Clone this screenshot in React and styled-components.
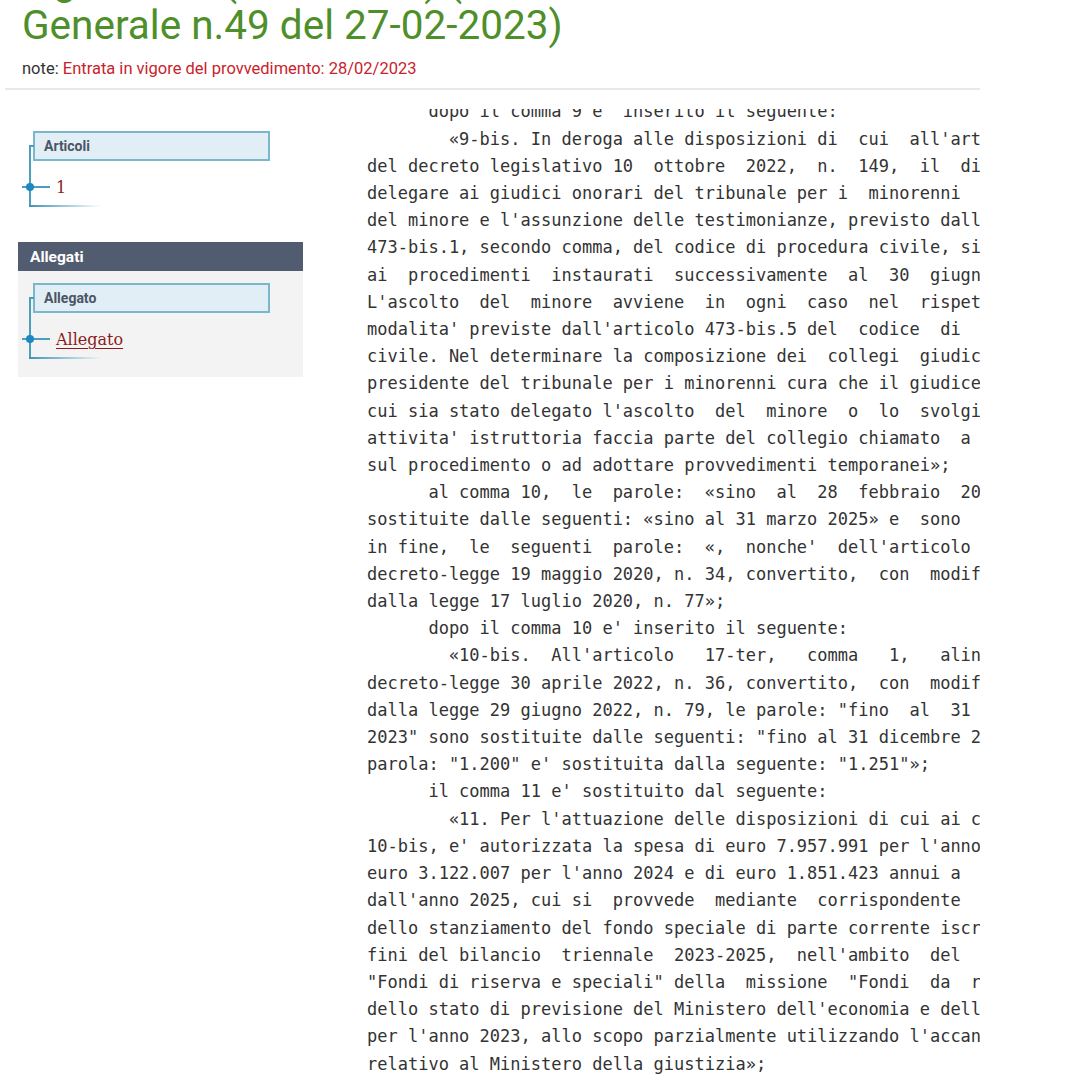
import styled, { createGlobalStyle } from "styled-components";

const GlobalStyle = createGlobalStyle`
  html, body {
    margin: 0;
    padding: 0;
    background: #fff;
    overflow: hidden;
  }
`;

const Page = styled.div`
  width: 975px;
  margin-left: 5px;
`;

const Header = styled.header`
  padding: 0 0 8px 17px;
  border-bottom: 2px solid #e8e8e8;
`;

const Title = styled.h1`
  margin: -41.3px 0 0;
  font-family: Roboto, sans-serif;
  font-weight: 400;
  font-size: 40.5px;
  line-height: 44px;
  color: #4e8f2a;
  white-space: nowrap;
`;

const Note = styled.p`
  margin: 11.3px 0 0;
  font-family: Roboto, sans-serif;
  font-size: 16.5px;
  line-height: 22px;
  color: #333;
`;

const NoteText = styled.span`
  color: #c8232c;
`;

const Main = styled.div`
  display: grid;
  grid-template-columns: 285px 1fr;
  column-gap: 64px;
  padding-left: 13px;
`;

const Sidebar = styled.aside`
  display: flex;
  flex-direction: column;
  gap: 35px;
  padding-top: 41px;
`;

const Tree = styled.div`
  position: relative;
  padding: 0 0 8px 15px;

  &::before {
    content: "";
    position: absolute;
    left: 11px;
    top: 14px;
    bottom: 0;
    width: 3px;
    border-left: 2px solid #4a9fbc;
    border-top: 2px solid #4a9fbc;
  }

  &::after {
    content: "";
    position: absolute;
    left: 11px;
    bottom: 0;
    width: 72px;
    height: 2px;
    background: linear-gradient(to right, #3b95b5, rgba(59, 149, 181, 0));
  }
`;

const TreeBox = styled.div`
  box-sizing: border-box;
  width: 237px;
  height: 30px;
  padding-left: 9px;
  display: flex;
  align-items: center;
  background: #e1eef5;
  border: 2px solid #7ab7cb;
  font-family: Roboto, sans-serif;
  font-weight: 700;
  font-size: 14px;
  color: #4b5566;
`;

const TreeItem = styled.div`
  position: relative;
  height: 24px;
  margin-top: 14px;
  padding-left: 23px;
  display: flex;
  align-items: center;
  font-family: "DejaVu Serif", serif;
  font-size: 16px;
  color: #8b1c1c;

  &::before {
    content: "";
    position: absolute;
    left: -11px;
    top: 11px;
    width: 28px;
    height: 2px;
    background: #4a9fbc;
  }

  &::after {
    content: "";
    position: absolute;
    left: -7px;
    top: 8px;
    width: 8px;
    height: 8px;
    border-radius: 50%;
    background: #1b88c2;
  }
`;

const TreeLink = styled.a`
  color: #8b1c1c;
  text-decoration: underline;
  text-underline-offset: 3px;
  text-decoration-thickness: 1px;
`;

const Panel = styled.section`
  width: 285px;
`;

const PanelHead = styled.div`
  height: 29px;
  padding-left: 12px;
  display: flex;
  align-items: center;
  background: #525c70;
  font-family: Roboto, sans-serif;
  font-weight: 700;
  font-size: 15.5px;
  color: #fff;
`;

const PanelBody = styled.div`
  padding: 12px 0 18px;
  background: #f3f3f3;
`;

const TextBox = styled.div`
  margin-top: 19px;
  height: calc(100vh - 109px);
  overflow: hidden;
`;

const Pre = styled.pre`
  margin: -10.6px 0 0;
  font-family: "DejaVu Sans Mono", monospace;
  font-size: 17px;
  line-height: 27.2px;
  color: #333;
  white-space: pre;
`;

const text = `      dopo il comma 9 e' inserito il seguente:
        «9-bis. In deroga alle disposizioni di  cui  all'articolo  49,
del decreto legislativo 10  ottobre  2022,  n.  149,  il  divieto  di
delegare ai giudici onorari del tribunale per i  minorenni  l'ascolto
del minore e l'assunzione delle testimonianze, previsto dall'articolo
473-bis.1, secondo comma, del codice di procedura civile, si applica
ai  procedimenti  instaurati  successivamente  al  30  giugno  2023.
L'ascolto  del  minore  avviene  in  ogni  caso  nel  rispetto  delle
modalita' previste dall'articolo 473-bis.5 del  codice  di  procedura
civile. Nel determinare la composizione dei  collegi  giudicanti,  il
presidente del tribunale per i minorenni cura che il giudice onorario
cui sia stato delegato l'ascolto  del  minore  o  lo  svolgimento  di
attivita' istruttoria faccia parte del collegio chiamato  a  pronunciarsi
sul procedimento o ad adottare provvedimenti temporanei»;
      al comma 10,  le  parole:  «sino  al  28  febbraio  2023»  sono
sostituite dalle seguenti: «sino al 31 marzo 2025» e  sono  aggiunte,
in fine,  le  seguenti  parole:  «,  nonche'  dell'articolo  103  del
decreto-legge 19 maggio 2020, n. 34, convertito,  con  modificazioni,
dalla legge 17 luglio 2020, n. 77»;
      dopo il comma 10 e' inserito il seguente:
        «10-bis.  All'articolo   17-ter,   comma   1,   alinea,   del
decreto-legge 30 aprile 2022, n. 36, convertito,  con  modificazioni,
dalla legge 29 giugno 2022, n. 79, le parole: "fino  al  31  dicembre
2023" sono sostituite dalle seguenti: "fino al 31 dicembre 2024" e la
parola: "1.200" e' sostituita dalla seguente: "1.251"»;
      il comma 11 e' sostituito dal seguente:
        «11. Per l'attuazione delle disposizioni di cui ai commi 10  e
10-bis, e' autorizzata la spesa di euro 7.957.991 per l'anno 2023, di
euro 3.122.007 per l'anno 2024 e di euro 1.851.423 annui a  decorrere
dall'anno 2025, cui si  provvede  mediante  corrispondente  riduzione
dello stanziamento del fondo speciale di parte corrente iscritto, ai
fini del bilancio  triennale  2023-2025,  nell'ambito  del  programma
"Fondi di riserva e speciali" della  missione  "Fondi  da  ripartire"
dello stato di previsione del Ministero dell'economia e delle finanze
per l'anno 2023, allo scopo parzialmente utilizzando l'accantonamento
relativo al Ministero della giustizia»;`;

export default function App() {
  return (
    <Page>
      <GlobalStyle />
      <Header>
        <Title>
          legislative. (23G00022) (GU Serie
          <br />
          Generale n.49 del 27-02-2023)
        </Title>
        <Note>
          note: <NoteText>Entrata in vigore del provvedimento: 28/02/2023</NoteText>
        </Note>
      </Header>
      <Main>
        <Sidebar>
          <Tree>
            <TreeBox>Articoli</TreeBox>
            <TreeItem>1</TreeItem>
          </Tree>
          <Panel>
            <PanelHead>Allegati</PanelHead>
            <PanelBody>
              <Tree>
                <TreeBox>Allegato</TreeBox>
                <TreeItem>
                  <TreeLink href="#">Allegato</TreeLink>
                </TreeItem>
              </Tree>
            </PanelBody>
          </Panel>
        </Sidebar>
        <TextBox>
          <Pre>{text}</Pre>
        </TextBox>
      </Main>
    </Page>
  );
}
